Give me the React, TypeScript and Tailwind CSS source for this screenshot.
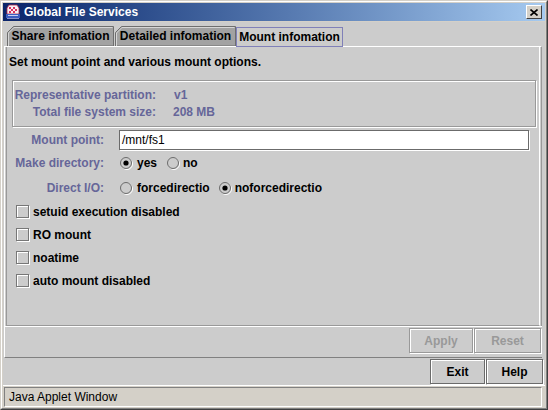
import React from "react";

function TabShape({ w }: { w: number }) {
  return (
    <svg width={w} height={20} className="absolute inset-0">
      <polygon
        points={`0.5,20 0.5,6.5 6.5,0.5 ${w - 0.5},0.5 ${w - 0.5},20`}
        fill="#a2a2a2"
        stroke="#6e6e6e"
      />
      <polyline points={`1.5,20 1.5,7 7,1.5 ${w - 1.5},1.5`} fill="none" stroke="#d6d6d6" />
    </svg>
  );
}

function Radio({ on }: { on?: boolean }) {
  return (
    <svg width="13" height="13" viewBox="0 0 13 13" className="shrink-0">
      <circle cx="7" cy="7" r="5.5" fill="none" stroke="#ffffff" />
      <circle cx="6" cy="6" r="5.5" fill="#cccccc" stroke="#6b6b6b" />
      {on && <circle cx="6" cy="6" r="2.6" fill="#000000" />}
    </svg>
  );
}

function Check({ label }: { label: string }) {
  return (
    <div className="h-[23px] flex items-center pl-[9px]">
      <div className="w-[13px] h-[13px] border border-[#777] shadow-[inset_1px_1px_0_#fff,1px_1px_0_#fff]" />
      <span className="ml-[4px] font-bold">{label}</span>
    </div>
  );
}

function Btn({ label, cls, disabled }: { label: string; cls: string; disabled?: boolean }) {
  return (
    <div
      className={`${cls} h-[25px] flex items-center justify-center font-bold border shadow-[inset_1px_1px_0_#fff,1px_1px_0_#fff] ${
        disabled ? "border-[#999999] text-[#999999]" : "border-[#6b6b6b] text-black"
      }`}
    >
      {label}
    </div>
  );
}

function JavaIcon() {
  return (
    <svg width="16" height="16" viewBox="0 0 16 16">
      <path d="M4 1h8l2 3v6H2V4z" fill="#f6eef4" stroke="#b02848" strokeWidth="0.8" />
      <path d="M4 3h2v2H4zM8 3h2v2H8zM6 5h2v2H6zM10 5h2v2h-2zM4 7h2v2H4zM8 7h2v2H8z" fill="#d83060" />
      <path d="M1 10h14v4H1z" fill="#3a5cc0" />
      <path d="M3 11h10v1H3z" fill="#c8d0f0" />
      <path d="M2 14h12v1H2z" fill="#8890c8" />
    </svg>
  );
}

export default function App() {
  return (
    <div className="w-[548px] h-[410px] bg-[#d4d0c8] border border-t-[#d4d0c8] border-l-[#d4d0c8] border-r-[#404040] border-b-[#404040] font-['Liberation_Sans',Arial,sans-serif] text-[12px] leading-[14px] text-black">
      <div className="h-full border border-t-white border-l-white border-r-[#808080] border-b-[#808080] p-px flex flex-col">
        {/* title bar */}
        <div className="h-[18px] shrink-0 flex items-center bg-linear-to-r from-[#0a246a] to-[#a6caf0] pl-[2px] pr-[3px]">
          <JavaIcon />
          <span className="ml-[3px] text-white font-bold text-[12px]">Global File Services</span>
          <div className="ml-auto w-[16px] h-[14px] bg-[#d4d0c8] border border-t-white border-l-white border-r-[#404040] border-b-[#404040] flex items-center justify-center">
            <svg width="8" height="7" viewBox="0 0 8 7">
              <path d="M0.5 0.5L7.5 6.5M7.5 0.5L0.5 6.5" stroke="#000" strokeWidth="1.6" />
            </svg>
          </div>
        </div>

        {/* body */}
        <div className="mt-px h-[364px] shrink-0 bg-[#cccccc] border-b border-b-white flex flex-col">
          {/* tabs */}
          <div className="h-[24px] shrink-0 flex items-end pl-[4px]">
            <div className="relative w-[107px] h-[20px] flex items-center justify-center font-bold whitespace-nowrap">
              <TabShape w={107} />
              <span className="relative">Share infomation</span>
            </div>
            <div className="relative ml-px w-[121px] h-[20px] flex items-center justify-center font-bold whitespace-nowrap">
              <TabShape w={121} />
              <span className="relative">Detailed infomation</span>
            </div>
            <div className="relative z-10 -mb-px w-[107px] h-[20px] border border-[#8080b8] bg-[#cccccc] flex items-center justify-center font-bold whitespace-nowrap">
              Mount infomation
            </div>
          </div>

          {/* main panel */}
          <div className="ml-px w-[538px] h-[312px] shrink-0 border-l border-l-white border-b border-b-[#808080] flex flex-col">
            <div className="h-[280px] shrink-0 border-t border-t-white border-r border-r-[#999999] px-px">
              <div className="h-full border-l border-b border-l-[#999999] border-b-[#999999] border-r border-r-white flex flex-col">
                <div className="mt-[8px] ml-[2px] h-[14px] font-bold whitespace-nowrap">
                  Set mount point and various mount options.
                </div>

                <div className="mt-[11px] ml-[5px] w-[524px] h-[47px] shrink-0 border border-[#999999] shadow-[inset_1px_1px_0_#fff,1px_1px_0_#fff] pt-[5px] font-bold text-[#666699] whitespace-nowrap">
                  <div className="h-[17px] flex items-center">
                    <span className="ml-[5px] w-[138px] shrink-0 flex justify-end">Representative partition:</span>
                    <span className="pl-[18px]">v1</span>
                  </div>
                  <div className="h-[17px] flex items-center">
                    <span className="ml-[5px] w-[138px] shrink-0 flex justify-end">Total file system size:</span>
                    <span className="pl-[17px]">208 MB</span>
                  </div>
                </div>

                <div className="mt-[3px] h-[20px] flex items-center whitespace-nowrap">
                  <span className="w-[97px] shrink-0 text-right font-bold text-[#666699]">Mount point:</span>
                  <div className="ml-[15px] w-[410px] h-[20px] bg-white border border-[#6b6b6b] shadow-[1px_1px_0_#fff] flex items-center pl-[2px]">
                    /mnt/fs1
                  </div>
                </div>

                <div className="h-[26px] flex items-center whitespace-nowrap">
                  <span className="w-[97px] shrink-0 text-right font-bold text-[#666699]">Make directory:</span>
                  <div className="ml-[16px] flex items-center">
                    <Radio on />
                    <span className="ml-[4px] font-bold">yes</span>
                  </div>
                  <div className="ml-[10px] flex items-center">
                    <Radio />
                    <span className="ml-[3px] font-bold">no</span>
                  </div>
                </div>

                <div className="h-[24px] flex items-center whitespace-nowrap">
                  <span className="w-[97px] shrink-0 text-right font-bold text-[#666699]">Direct I/O:</span>
                  <div className="ml-[16px] flex items-center">
                    <Radio />
                    <span className="ml-[4px] font-bold">forcedirectio</span>
                  </div>
                  <div className="ml-[9px] flex items-center">
                    <Radio on />
                    <span className="ml-[3px] font-bold">noforcedirectio</span>
                  </div>
                </div>

                <Check label="setuid execution disabled" />
                <Check label="RO mount" />
                <Check label="noatime" />
                <Check label="auto mount disabled" />
              </div>
            </div>

            <div className="h-[31px] shrink-0 border-t border-t-white pt-px flex justify-end gap-px pr-[1px]">
              <Btn label="Apply" cls="w-[64px]" disabled />
              <Btn label="Reset" cls="w-[67px]" disabled />
            </div>
          </div>

          {/* exit row */}
          <div className="h-[27px] shrink-0 pt-px flex justify-end gap-px pr-[2px]">
            <Btn label="Exit" cls="w-[55px]" />
            <Btn label="Help" cls="w-[57px]" />
          </div>
        </div>

        {/* status bar */}
        <div className="h-[21px] shrink-0 pt-px pl-px">
          <div className="w-[538px] h-[20px] border border-t-[#808080] border-l-[#808080] border-r-white border-b-white flex items-center pl-[4px]">
            Java Applet Window
          </div>
        </div>
      </div>
    </div>
  );
}
